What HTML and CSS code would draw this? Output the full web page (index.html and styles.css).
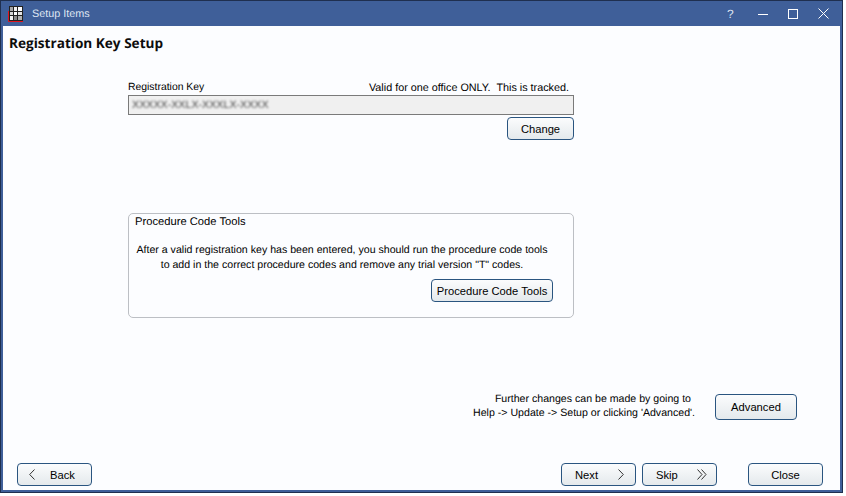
FILE: index.html
```html
<!DOCTYPE html>
<html lang="en">
<head>
<meta charset="utf-8">
<title>Setup Items</title>
<link rel="stylesheet" href="styles.css">
</head>
<body>
<div class="window">
  <header class="titlebar">
    <svg class="app-icon" width="16" height="16" viewBox="0 0 16 16">
      <path d="M.5 5V15.5H15" fill="none" stroke="#e0141e" stroke-width="1"/>
      <rect x="1" y="0" width="14" height="15" fill="#222"/>
      <rect x="2" y="1" width="3" height="4" fill="#a8a8a8"/>
      <rect x="6" y="1" width="3" height="4" fill="#f2f2f2"/>
      <rect x="10" y="1" width="4" height="4" fill="#ffffff"/>
      <rect x="2" y="6" width="3" height="3" fill="#d8d8d8"/>
      <rect x="6" y="6" width="3" height="3" fill="#ffffff"/>
      <rect x="10" y="6" width="4" height="3" fill="#e4e4e4"/>
      <rect x="2" y="10" width="3" height="4" fill="#f4f4f4"/>
      <rect x="6" y="10" width="3" height="4" fill="#8a8a8a"/>
      <rect x="10" y="10" width="4" height="4" fill="#b0b0b0"/>
    </svg>
    <span class="title">Setup Items</span>
    <span class="help">?</span>
    <svg class="cap min" width="10" height="10" viewBox="0 0 10 10"><path d="M0 5.5H10" stroke="#fff"/></svg>
    <svg class="cap max" width="10" height="10" viewBox="0 0 10 10"><rect x=".5" y=".5" width="9" height="9" fill="none" stroke="#fff"/></svg>
    <svg class="cap close" width="11" height="11" viewBox="0 0 11 11"><path d="M.5 .5L10.5 10.5M10.5 .5L.5 10.5" stroke="#fff"/></svg>
  </header>
  <main class="client">
    <h1 class="heading">Registration Key Setup</h1>
    <section class="key">
      <div class="key-labels">
        <label class="label-key">Registration Key</label>
        <span>Valid for one office ONLY.&nbsp; This is tracked.</span>
      </div>
      <div class="key-field"><span class="key-value">XXXXX-XXLX-XXXLX-XXXX</span></div>
      <div class="right"><button class="btn btn-change">Change</button></div>
    </section>
    <fieldset class="tools">
      <div class="tools-title">Procedure Code Tools</div>
      <p class="tools-text">After a valid registration key has been entered, you should run the procedure code tools<br>to add in the correct procedure codes and remove any trial version "T" codes.</p>
      <div class="right"><button class="btn btn-tools">Procedure Code Tools</button></div>
    </fieldset>
    <div class="advanced">
      <p class="advanced-text"><span class="advanced-first">Further changes can be made by going to</span><br>Help -&gt; Update -&gt; Setup or clicking 'Advanced'.</p>
      <button class="btn btn-advanced">Advanced</button>
    </div>
    <footer class="footer">
      <button class="btn btn-nav btn-back">
        <svg width="6" height="11" viewBox="0 0 6 11"><path d="M5.5 .5L.7 5.5L5.5 10.5" fill="none" stroke="#333"/></svg>
        <span>Back</span>
      </button>
      <span class="spacer"></span>
      <button class="btn btn-nav btn-next">
        <span>Next</span>
        <svg width="6" height="11" viewBox="0 0 6 11"><path d="M.5 .5L5.3 5.5L.5 10.5" fill="none" stroke="#333"/></svg>
      </button>
      <button class="btn btn-nav btn-skip">
        <span>Skip</span>
        <svg width="10" height="11" viewBox="0 0 10 11"><path d="M.5 .5L5 5.5L.5 10.5M4.5 .5L9 5.5L4.5 10.5" fill="none" stroke="#333"/></svg>
      </button>
      <button class="btn btn-nav btn-close">Close</button>
    </footer>
  </main>
</div>
</body>
</html>
```
FILE: styles.css
```css
* { box-sizing: border-box; }
html, body { margin: 0; padding: 0; background: #fff; }
body { width: 846px; height: 496px; font-family: "Liberation Sans", Arial, sans-serif; font-size: 10.8px; color: #000; overflow: hidden; text-rendering: geometricPrecision; }
.window { width: 843px; height: 493px; background: #3f5f99; border: 1px solid #1f2f4f; display: flex; flex-direction: column; padding: 0 2px 2px; }
.titlebar { height: 25px; flex: none; display: flex; align-items: center; padding-left: 5px; color: #fff; }
.app-icon { flex: none; }
.title { margin-left: 8px; padding-top: 1px; color: #dfe6f3; font-size: 10.8px; }
.help { margin-left: auto; padding-top: 1px; font-size: 12px; color: #dfe6f3; width: 10px; }
.cap { flex: none; }
.min { margin-left: 21px; }
.max { margin-left: 20px; }
.close { margin-left: 20px; margin-right: 11px; }
.client { flex: 1; background: #fcfdff; display: flex; flex-direction: column; padding: 8px 17px 4px 13px; }
.heading { margin: 0 0 0 -7px; font-family: "Open Sans", "DejaVu Sans", sans-serif; font-size: 13.6px; line-height: 18px; font-weight: 700; color: #0c0c0c; }
.key { width: 446px; margin: 28px 0 0 112px; }
.key-labels { display: flex; justify-content: space-between; padding: 1px 5px 0 0; line-height: 14px; height: 14px; }
.label-key { font-size: 10.4px; }
.key-field { height: 20px; margin-top: 1px; background: #f0f0f0; border: 1px solid #7a7a7a; padding: 0 3px; display: flex; align-items: center; overflow: hidden; }
.key-value { color: #444; font-size: 10.7px; filter: blur(1.2px); }
.right { display: flex; justify-content: flex-end; }
.btn { font-family: inherit; font-size: 11.2px; color: #000; height: 23px; padding: 0; border: 1px solid #2a5580; border-radius: 4px; background: linear-gradient(#fbfcfd, #e4e9ec); }
.btn-change { width: 67px; margin-top: 2px; }
.tools { width: 446px; height: 105px; margin: 73px 0 0 112px; padding: 0; border: 1px solid #bcbfc4; border-radius: 5px; }
.tools-title { margin: 1px 0 0 6px; font-size: 11.2px; line-height: 14px; }
.tools-text { margin: 14px 0 0; padding-right: 18px; font-size: 10.6px; text-align: center; line-height: 15px; white-space: nowrap; }
.tools .right { padding-right: 20px; margin-top: 6px; }
.btn-tools { width: 122px; }
.advanced { display: flex; align-items: center; justify-content: flex-end; margin: 74px 26px 0 0; }
.advanced-text { margin: 0 20px 2px 0; font-size: 10.6px; text-align: right; line-height: 14px; }
.advanced-first { margin-right: 4px; }
.btn-advanced { width: 82px; height: 26px; }
.footer { display: flex; margin-top: auto; padding-left: 1px; align-items: center; }
.spacer { flex: 1; }
.btn-nav { width: 75px; height: 23px; display: flex; align-items: center; justify-content: center; }
.btn-back { justify-content: flex-start; gap: 15px; padding-left: 11px; }
.btn-next { justify-content: space-between; padding: 0 11px 0 13px; margin-right: 6px; }
.btn-skip { justify-content: space-between; padding: 0 9px 0 13px; margin-right: 31px; }
```
